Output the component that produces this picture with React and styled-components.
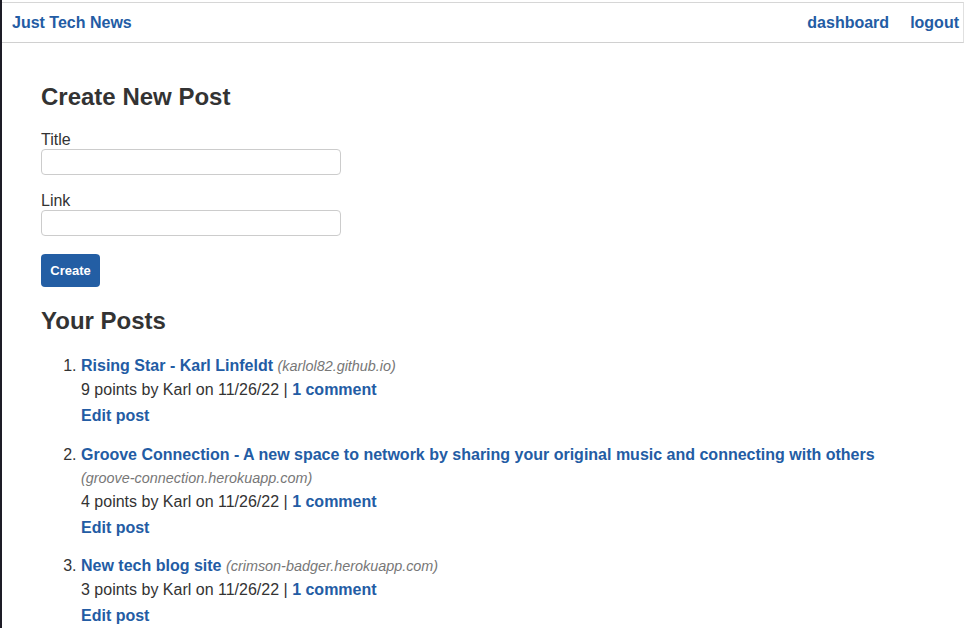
import React from "react";
import styled, { createGlobalStyle } from "styled-components";

const GlobalStyle = createGlobalStyle`
  html, body {
    margin: 0;
    padding: 0;
    background: #ffffff;
  }
  body {
    font-family: "Liberation Sans", Arial, sans-serif;
    color: #333333;
    font-size: 16px;
  }
`;

const Page = styled.div`
  min-height: 628px;
  border-left: 2px solid #1d1c26;
  padding-top: 2px;
  box-sizing: border-box;
`;

const Header = styled.header`
  display: flex;
  align-items: center;
  justify-content: space-between;
  height: 39px;
  padding: 0 4px 0 10px;
  border-top: 1px solid #d6d6d6;
  border-bottom: 1px solid #d0d0d0;
  border-right: 1px solid #e0e0e0;
`;

const Brand = styled.a`
  color: #235ca4;
  font-weight: bold;
  font-size: 16px;
  text-decoration: none;
`;

const Nav = styled.nav`
  display: flex;
  gap: 21px;
`;

const NavLink = styled.a`
  color: #235ca4;
  font-weight: bold;
  font-size: 16px;
  text-decoration: none;
`;

const Main = styled.main`
  padding: 40px 39px 0;
`;

const Heading = styled.h2`
  margin: 0;
  font-size: 24px;
  line-height: 28px;
  font-weight: bold;
  color: #333333;
`;

const Form = styled.form`
  display: flex;
  flex-direction: column;
  align-items: flex-start;
  margin: 20px 0 20px;
`;

const Label = styled.label`
  display: block;
  font-size: 16px;
  line-height: 18px;
  margin-top: ${(p) => (p.$first ? "0" : "17px")};
`;

const Input = styled.input`
  width: 300px;
  height: 26px;
  box-sizing: border-box;
  border: 1px solid #cccccc;
  border-radius: 4px;
  padding: 2px 6px;
  font-size: 14px;
`;

const Button = styled.button`
  margin-top: 18px;
  width: 59px;
  height: 33px;
  border: none;
  border-radius: 4px;
  background: #235ea4;
  color: #ffffff;
  font-family: "Liberation Sans", Arial, sans-serif;
  font-weight: bold;
  font-size: 13px;
`;

const PostList = styled.ol`
  margin: 19px 0 0;
  padding-left: 40px;
`;

const Post = styled.li`
  margin-bottom: 15.5px;
  line-height: 23px;
  font-size: 16px;
  color: #333333;
`;

const PostTitle = styled.a`
  color: #235ca4;
  font-weight: bold;
  text-decoration: none;
`;

const Domain = styled.span`
  color: #777777;
  font-style: italic;
  font-size: 14.4px;
`;

const Meta = styled.div`
  line-height: 23px;
`;

const BlueBold = styled.a`
  color: #235ca4;
  font-weight: bold;
  text-decoration: none;
`;

const EditLink = styled(BlueBold)`
  display: block;
  margin-top: 3px;
`;

const posts = [
  {
    title: "Rising Star - Karl Linfeldt",
    domain: "karlol82.github.io",
    points: 9,
  },
  {
    title:
      "Groove Connection - A new space to network by sharing your original music and connecting with others",
    domain: "groove-connection.herokuapp.com",
    points: 4,
  },
  {
    title: "New tech blog site",
    domain: "crimson-badger.herokuapp.com",
    points: 3,
  },
];

export default function App() {
  return (
    <>
      <GlobalStyle />
      <Page>
        <Header>
          <Brand href="#">Just Tech News</Brand>
          <Nav>
            <NavLink href="#">dashboard</NavLink>
            <NavLink href="#">logout</NavLink>
          </Nav>
        </Header>
        <Main>
          <Heading>Create New Post</Heading>
          <Form onSubmit={(e) => e.preventDefault()}>
            <Label $first htmlFor="post-title">Title</Label>
            <Input id="post-title" type="text" />
            <Label htmlFor="post-url">Link</Label>
            <Input id="post-url" type="text" />
            <Button type="submit">Create</Button>
          </Form>
          <Heading>Your Posts</Heading>
          <PostList>
            {posts.map((post) => (
              <Post key={post.title}>
                <div>
                  <PostTitle href="#">{post.title}</PostTitle>{" "}
                  <Domain>({post.domain})</Domain>
                </div>
                <Meta>
                  {post.points} points by Karl on 11/26/22 |{" "}
                  <BlueBold href="#">1 comment</BlueBold>
                </Meta>
                <EditLink href="#">Edit post</EditLink>
              </Post>
            ))}
          </PostList>
        </Main>
      </Page>
    </>
  );
}
